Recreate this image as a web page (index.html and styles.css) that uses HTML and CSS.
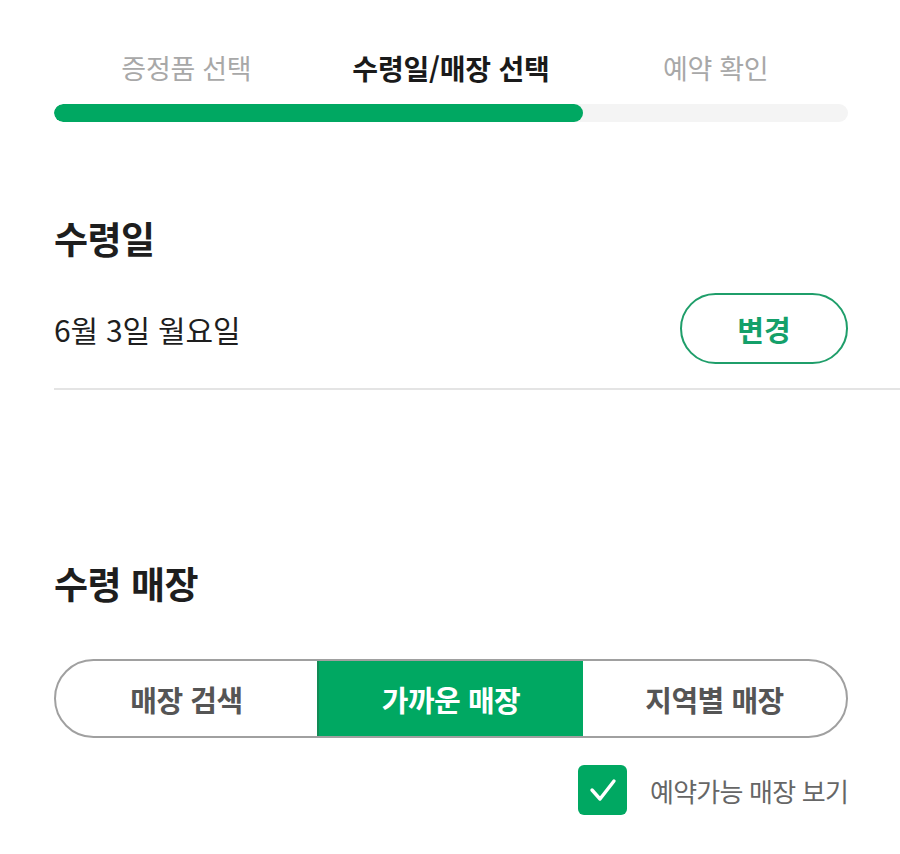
FILE: index.html
```html
<!DOCTYPE html>
<html lang="ko">
<head>
<meta charset="utf-8">
<link rel="stylesheet" href="styles.css">
</head>
<body>
<div class="page">
  <div class="steps">
    <div class="step">증정품 선택</div>
    <div class="step active">수령일/매장 선택</div>
    <div class="step">예약 확인</div>
  </div>
  <div class="progress"><div class="progress-fill" style="width: 66.6%"></div></div>

  <h2 class="title title-date">수령일</h2>
  <div class="date-row">
    <span class="date-text">6월 3일 월요일</span>
    <button class="change-btn">변경</button>
  </div>

  <h2 class="title title-store">수령 매장</h2>
  <div class="segments">
    <div class="seg">매장 검색</div>
    <div class="seg selected">가까운 매장</div>
    <div class="seg">지역별 매장</div>
  </div>
  <div class="check-row">
    <span class="checkbox">
      <svg width="32" height="32" viewBox="0 0 32 32"><path d="M5 16 L13 25 L27 7" fill="none" stroke="#fff" stroke-width="3.4" stroke-linecap="round" stroke-linejoin="round"/></svg>
    </span>
    <span class="check-label">예약가능 매장 보기</span>
  </div>
</div>
</body>
</html>
```
FILE: styles.css
```css
* { box-sizing: border-box; }
html, body { margin: 0; padding: 0; background: #fff; }
body {
  font-family: "Noto Sans CJK KR", "Noto Sans", sans-serif;
  color: #222;
  width: 900px;
  height: 854px;
  overflow: hidden;
}
.page { padding-left: 54px; }
.steps {
  display: grid;
  grid-template-columns: 1fr 1fr 1fr;
  margin: 50px 52px 0 0;
  height: 36px;
  line-height: 36px;
  text-align: center;
  font-size: 27px;
  color: #a8a8a8;
  letter-spacing: -0.3px;
}
.step.active { color: #1a1a1a; font-weight: 700; font-size: 28px; letter-spacing: -0.2px; }
.progress {
  margin: 18px 52px 0 0;
  height: 18px;
  border-radius: 9px;
  background: #f4f4f4;
  overflow: hidden;
}
.progress-fill { height: 100%; background: #00a862; border-radius: 9px; }
.title {
  margin: 0;
  font-size: 37px;
  line-height: 44px;
  font-weight: 700;
  color: #1e1e1e;
  letter-spacing: -0.5px;
}
.title-date { margin-top: 94px; }
.title-store { margin-top: 171px; }
.date-row {
  margin-top: 33px;
  display: flex;
  align-items: center;
  justify-content: space-between;
  padding: 0 52px 24px 0;
  border-bottom: 2px solid #e4e4e4;
}
.date-text { font-size: 30px; color: #1e1e1e; letter-spacing: -0.2px; }
.change-btn {
  width: 168px;
  height: 71px;
  border: 2px solid #1f9e6a;
  border-radius: 36px;
  background: #fff;
  color: #14a06a;
  font-family: inherit;
  font-size: 29px;
  font-weight: 700;
  padding: 0;
}
.segments {
  margin: 54px 52px 0 0;
  height: 79px;
  display: grid;
  grid-template-columns: 261px 266px 1fr;
  border: 2px solid #a0a0a0;
  border-radius: 40px;
  overflow: hidden;
}
.seg {
  display: flex;
  align-items: center;
  justify-content: center;
  font-size: 29px;
  font-weight: 700;
  color: #555;
  letter-spacing: -0.5px;
}
.seg.selected { background: #00a862; color: #fff; border-left: 2px solid #128a55; }
.check-row {
  margin: 27px 52px 0 0;
  display: flex;
  justify-content: flex-end;
  align-items: center;
  gap: 23px;
}
.checkbox {
  width: 49px;
  height: 50px;
  border-radius: 6px;
  background: #00a862;
  display: flex;
  align-items: center;
  justify-content: center;
}
.check-label { font-size: 26px; color: #666; letter-spacing: -0.8px; }
```
